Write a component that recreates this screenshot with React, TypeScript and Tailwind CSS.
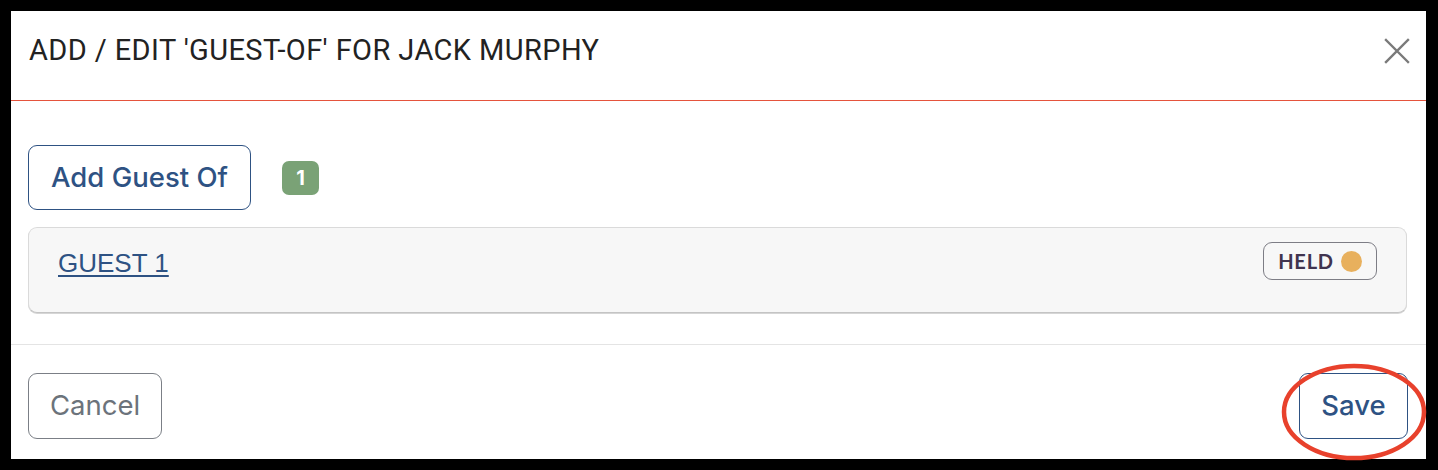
import React from 'react';

const CloseIcon = () => (
  <svg width="26" height="26" viewBox="0 0 26 26" fill="none" stroke="#7a7a7a" strokeWidth={2.4} strokeLinecap="square">
    <path d="M2 2L24 24M24 2L2 24" />
  </svg>
);

export default function App() {
  return (
    <div className="h-[470px] w-[1438px] bg-black pt-[11px] pl-[11px] pr-[12px] pb-[11px]">
      <div className="flex h-full flex-col bg-white">
        {/* Header */}
        <div className="flex h-[90px] items-center justify-between border-b border-[#e5533d] pl-[18px] pr-[16px] pb-[10px]">
          <h2 className="text-[29px] font-normal tracking-[0.4px] text-[#222] font-['Roboto',sans-serif]">
            ADD / EDIT 'GUEST-OF' FOR JACK MURPHY
          </h2>
          <button className="flex h-[26px] w-[26px] items-center justify-center">
            <CloseIcon />
          </button>
        </div>

        {/* Body */}
        <div className="border-b border-[#e4e4e4] pt-[44px] pl-[17px] pr-[19px] pb-[31px] font-['Inter',sans-serif]">
          <div className="flex items-center gap-[31px]">
            <button className="h-[65px] w-[223px] rounded-[9px] border border-[#2e5283] text-[27.5px] font-medium text-[#2e5283]">
              Add Guest Of
            </button>
            <span className="flex h-[34px] w-[37px] items-center justify-center rounded-[7px] bg-[#7aa276] text-[20px] font-bold text-white">
              1
            </span>
          </div>
          <div className="mt-[17px] flex h-[86px] items-start justify-between rounded-[9px] border border-[#dadada] border-b-[#c4c4c4] bg-[#f7f7f7] pt-[14px] pl-[29px] pr-[29px] shadow-[0_1px_0_#d6d6d6]">
            <a href="#" className="mt-[2px] text-[26px] text-[#2e5283] underline underline-offset-[3px] decoration-[1.5px] font-['Liberation_Sans',sans-serif]">
              GUEST 1
            </a>
            <span className="flex h-[38px] w-[114px] items-center justify-center gap-[7px] rounded-[9px] border border-[#7d7d85] font-['Lato',sans-serif] text-[20px] font-bold tracking-[0.8px] text-[#40344f]">
              HELD
              <span className="h-[21px] w-[21px] rounded-full bg-[#e8b05d]" />
            </span>
          </div>
        </div>

        {/* Footer */}
        <div className="flex items-start justify-between pt-[28px] pl-[17px] pr-[18px] font-['Inter',sans-serif]">
          <button className="h-[66px] w-[134px] rounded-[9px] border border-[#7b7f86] text-[27.5px] text-[#6c737b]">
            Cancel
          </button>
          <div className="relative">
            <button className="h-[66px] w-[109px] rounded-[9px] border border-[#2e5283] text-[27.5px] font-medium text-[#2e5283]">
              Save
            </button>
            <svg className="pointer-events-none absolute left-[-20px] top-[-13px]" width="150" height="105" viewBox="0 0 150 105" fill="none">
              <ellipse cx="75" cy="52" rx="70" ry="46" stroke="#e8412c" strokeWidth={4.5} />
            </svg>
          </div>
        </div>
      </div>
    </div>
  );
}
